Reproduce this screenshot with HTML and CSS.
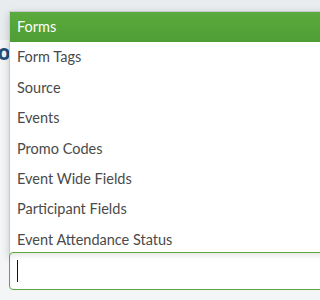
FILE: index.html
```html
<!DOCTYPE html>
<html>
<head>
<meta charset="utf-8">
<link rel="stylesheet" href="styles.css">
</head>
<body>
<div class="page">
  <div class="topbar"></div>
  <div class="content">
    <div class="title">Document</div>
  </div>
  <div class="dropdown">
    <ul class="list">
      <li class="item active">Forms</li>
      <li class="item">Form Tags</li>
      <li class="item">Source</li>
      <li class="item">Events</li>
      <li class="item">Promo Codes</li>
      <li class="item">Event Wide Fields</li>
      <li class="item">Participant Fields</li>
      <li class="item">Event Attendance Status</li>
    </ul>
    <div class="search"><span class="caret"></span></div>
  </div>
</div>
</body>
</html>
```
FILE: styles.css
```css
* { box-sizing: border-box; }
html, body { margin: 0; padding: 0; background: #f4f5f6; }
body { font-family: Lato, "Open Sans", sans-serif; overflow: hidden; }
.page { position: relative; width: 100%; height: 300px; background: #f4f5f6; overflow: hidden; }
.topbar { height: 40px; background: #e9ecee; }
.title { font-family: "Open Sans", sans-serif; font-weight: 700; font-size: 21px; line-height: 24px; color: #21507c; margin-left: -18px; white-space: nowrap; }
.dropdown { position: absolute; left: 9px; top: 11px; right: -20px; }
.list { list-style: none; margin: 0; padding: 0; background: #fff; border-top: 1px solid #c9cccf; border-left: 1px solid #c9cccf; box-shadow: 0 3px 8px rgba(0,0,0,0.18); }
.item { padding: 5px 8px 5px 7px; line-height: 20.4px; font-size: 14.5px; color: #4a4a4a; white-space: nowrap; }
.item.active { background: linear-gradient(#5aab3d, #4f9d35); color: #fff; }
.search { position: relative; height: 38px; margin-top: -3px; background: #fff; border: 1px solid #5aa83e; border-radius: 4px; box-shadow: inset 0 5px 6px -3px rgba(0,0,0,0.12); display: flex; align-items: center; padding-left: 7px; }
.caret { display: block; width: 1px; height: 22px; background: #111; }
```
